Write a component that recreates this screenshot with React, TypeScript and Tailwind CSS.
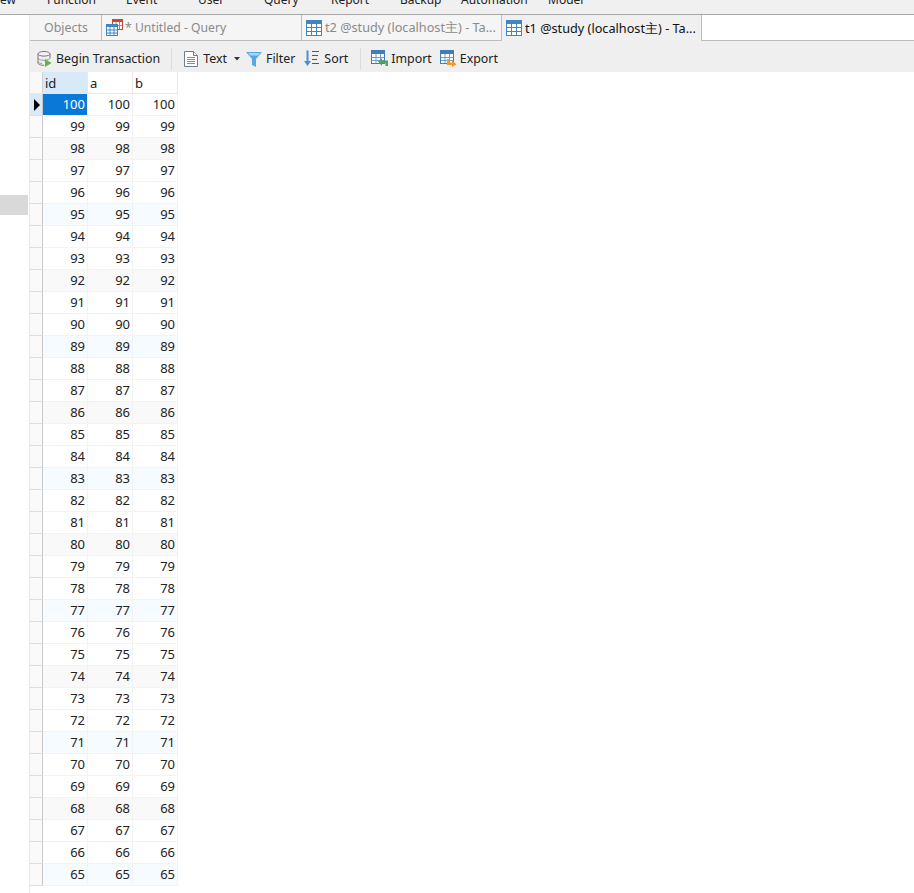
const FONT = "font-['Noto_Sans','Open_Sans',sans-serif]";

function GridIcon({ className = "" }: { className?: string }) {
  return (
    <svg width="16" height="16" viewBox="0 0 16 16" className={className}>
      <rect x="0.5" y="0.5" width="15" height="15" fill="#fff" stroke="#3f87c4" />
      <rect x="0" y="0" width="16" height="4" fill="#3f87c4" />
      <path d="M5.5 4v11M10.5 4v11M1 7.5h14M1 11.5h14" stroke="#3f87c4" fill="none" />
    </svg>
  );
}

function QueryIcon() {
  return (
    <svg width="17" height="17" viewBox="0 0 17 17">
      <rect x="6.5" y="0.5" width="10" height="10" fill="#fff" stroke="#c8473c" />
      <rect x="6" y="0" width="11" height="3" fill="#c8473c" />
      <path d="M10 3v7M13.500 3v7M7 6.500h9" stroke="#d9776e" fill="none" />
      <rect x="0.500" y="5.500" width="11" height="11" fill="#fff" stroke="#3f87c4" />
      <rect x="0" y="5" width="12" height="3" fill="#3f87c4" />
      <path d="M4 8v8M8 8v8M1 11h10M1 14h10" stroke="#3f87c4" fill="none" />
    </svg>
  );
}

function TransactionIcon() {
  return (
    <svg width="16" height="16" viewBox="0 0 16 16">
      <ellipse cx="7" cy="2.800" rx="6" ry="2.300" fill="#f3f3f3" stroke="#777" />
      <path d="M1 3v9c0 1.300 2.500 2.300 6 2.300M13 3v4" fill="none" stroke="#777" />
      <path d="M1 7c0 1.300 2.500 2.300 6 2.300s6-1 6-2.300M1 10.500c0 1 1.600 1.800 4 2.100" fill="none" stroke="#999" />
      <path d="M8 8l6.500 4-6.500 4z" fill="#5fb548" />
    </svg>
  );
}

function TextIcon() {
  return (
    <svg width="14" height="16" viewBox="0 0 14 16">
      <path d="M0.500 0.500h9l4 4v11h-13z" fill="#fff" stroke="#6f7f8f" />
      <path d="M9.500 0.500v4h4" fill="#e6edf3" stroke="#6f7f8f" />
      <path d="M3 6.500h8M3 8.500h8M3 10.500h8M3 12.500h8" stroke="#4b9bd8" />
    </svg>
  );
}

function FilterIcon() {
  return (
    <svg width="16" height="16" viewBox="0 0 16 16">
      <path d="M0 1h16L10 8v8l-4-2V8z" fill="#55a9e0" />
      <path d="M2 2h12l-2 2.500H4z" fill="#a6d6f2" />
    </svg>
  );
}

function SortIcon() {
  return (
    <svg width="15" height="17" viewBox="0 0 15 17">
      <path d="M2.500 0.500h2V11H7L3.500 16 0 11h2.500z" fill="#4a90d0" />
      <path d="M8 1.500h7M8 5.500h6M8 9.500h5M8 13.500h7" stroke="#555" fill="none" />
    </svg>
  );
}

function ImportIcon() {
  return (
    <svg width="17" height="17" viewBox="0 0 17 17">
      <rect x="0.500" y="0.500" width="13" height="13" fill="#fff" stroke="#3f7fb5" />
      <rect x="0" y="0" width="14" height="4" fill="#3f7fb5" />
      <path d="M5 4v9M9.500 4v9M1 7.500h12M1 10.500h12" stroke="#6aa0cc" fill="none" />
      <path d="M17 16h-2.500v-3H11v3L7 11.500 11 8v2.500h6z" fill="#4fa65a" />
    </svg>
  );
}

function ExportIcon() {
  return (
    <svg width="17" height="17" viewBox="0 0 17 17">
      <rect x="0.500" y="0.500" width="13" height="13" fill="#fff" stroke="#3f7fb5" />
      <rect x="0" y="0" width="14" height="4" fill="#3f7fb5" />
      <path d="M5 4v9M9.500 4v9M1 7.500h12M1 10.500h12" stroke="#6aa0cc" fill="none" />
      <path d="M7 9h2.500v3.500H12V10l4.500 4.500L12 17v-2H7z" fill="#ef9a2e" />
    </svg>
  );
}

const menu: [string, string][] = [
  ["ew", "w-[47px]"],
  ["Function", "w-[79px]"],
  ["Event", "w-[72px]"],
  ["User", "w-[66px]"],
  ["Query", "w-[67px]"],
  ["Report", "w-[69px]"],
  ["Backup", "w-[61px]"],
  ["Automation", "w-[87px]"],
  ["Model", "w-[60px]"],
];

const rows = Array.from({ length: 36 }, (_, i) => 100 - i);

function rowBg(v: number) {
  const m = v % 6;
  if (m === 5) return "bg-[#f6fbff]";
  if (m === 2) return "bg-[#f9f9f9]";
  return "bg-white";
}

function Tab({ active, icon, label, size, gap }: { active?: boolean; icon: React.ReactNode; label: string; size: string; gap: string }) {
  return (
    <div
      className={
        "flex h-[26px] w-[200px] shrink-0 items-center border-r border-[#bdbdbd] pl-[4px] " +
        gap +
        " " +
        (active ? "bg-[#f0f0f0] text-[#111]" : "border-b bg-[#f5f5f5] text-[#8a8a8a]")
      }
    >
      {icon}
      <span className={"whitespace-nowrap pt-[1px] " + size}>{label}</span>
    </div>
  );
}

function Tool({ icon, label, gap = "gap-[4px]" }: { icon: React.ReactNode; label: string; gap?: string }) {
  return (
    <div className={"flex items-center " + gap}>
      {icon}
      <span className="whitespace-nowrap">{label}</span>
    </div>
  );
}

export default function App() {
  return (
    <div className={"flex h-[893px] w-[914px] flex-col overflow-hidden bg-white text-[13px] text-[#222] " + FONT}>
      <div className="flex h-[15px] shrink-0 overflow-hidden border-b border-[#a8a8a8] bg-[#f0f0f0] text-[12px] leading-[18px]">
        {menu.map(([t, w]) => (
          <div key={t} className={"h-[14px] shrink-0 whitespace-nowrap " + w}>
            <div className="-mt-[9px]">{t}</div>
          </div>
        ))}
      </div>
      <div className="flex min-h-0 flex-1">
        <div className="flex w-[30px] shrink-0 flex-col border-r border-[#e8e8e8] pt-[180px]">
          <div className="h-[20px] w-[28px] bg-[#d9d9d9]" />
        </div>
        <div className="flex min-w-0 flex-1 flex-col">
          <div className="flex h-[26px] shrink-0 text-[12.4px]">
            <div className="flex w-[72px] shrink-0 items-center border-r border-b border-[#bdbdbd] bg-[#f5f5f5] pl-[14px] pt-[1px] text-[#8a8a8a]">
              Objects
            </div>
            <Tab icon={<QueryIcon />} label="* Untitled - Query" size="text-[12.2px]" gap="gap-[2px]" />
            <Tab icon={<GridIcon />} label="t2 @study (localhost主) - Ta..." size="text-[12.7px]" gap="gap-[3px]" />
            <Tab active icon={<GridIcon />} label="t1 @study (localhost主) - Ta..." size="text-[12.7px]" gap="gap-[3px]" />
            <div className="flex-1 border-b border-[#bdbdbd]" />
          </div>
          <div className="flex h-[31px] shrink-0 items-center bg-[#efefef] pl-[7px] pt-[5px] text-[12.4px]">
            <Tool icon={<TransactionIcon />} label="Begin Transaction" gap="gap-[3px]" />
            <div className="ml-[11px] mr-[12px] h-[22px] w-px bg-[#dcdcdc]" />
            <Tool icon={<TextIcon />} label="Text" gap="gap-[5px]" />
            <svg width="6" height="4" viewBox="0 0 6 4" className="ml-[7px]">
              <path d="M0 0h6L3 3.500z" fill="#333" />
            </svg>
            <div className="ml-[6px]">
              <Tool icon={<FilterIcon />} label="Filter" />
            </div>
            <div className="ml-[9px]">
              <Tool icon={<SortIcon />} label="Sort" gap="gap-[5px]" />
            </div>
            <div className="ml-[12px] mr-[10px] h-[22px] w-px bg-[#dcdcdc]" />
            <Tool icon={<ImportIcon />} label="Import" gap="gap-[3px]" />
            <div className="ml-[8px]">
              <Tool icon={<ExportIcon />} label="Export" gap="gap-[3px]" />
            </div>
          </div>
          <div className="w-[148px]">
            <div className="flex h-[22px] border-b border-[#e8e8e8]">
              <div className="w-[13px] shrink-0 border-r border-[#d0d0d0] bg-[#f9f9f9]" />
              <div className="w-[45px] border-r border-[#e8e8e8] bg-[#d8e9f7] pl-[2px] leading-[22px]">id</div>
              <div className="w-[45px] border-r border-[#e8e8e8] pl-[2px] leading-[22px]">a</div>
              <div className="w-[45px] border-r border-[#e8e8e8] pl-[2px] leading-[22px]">b</div>
            </div>
            {rows.map((v, i) => (
              <div key={v} className={"flex h-[22px] " + rowBg(v)}>
                <div
                  className={
                    "flex w-[13px] shrink-0 items-center justify-center border-r border-b border-r-[#c8c8c8] border-b-[#dedede] " +
                    (i === 0 ? "bg-[#d8e9f7]" : "bg-[#fafafa]")
                  }
                >
                  {i === 0 && (
                    <svg width="6" height="12" viewBox="0 0 6 12" className="ml-[1px]">
                      <path d="M0 0l6 6-6 6z" fill="#000" />
                    </svg>
                  )}
                </div>
                {[0, 1, 2].map((c) => (
                  <div
                    key={c}
                    className={
                      "w-[45px] border-r border-b border-[#f3f3f3] pr-[2px] text-right leading-[21px] " +
                      (i === 0 && c === 0 ? "bg-[#0a78d7] text-white" : "")
                    }
                  >
                    {v}
                  </div>
                ))}
              </div>
            ))}
          </div>
        </div>
      </div>
    </div>
  );
}
